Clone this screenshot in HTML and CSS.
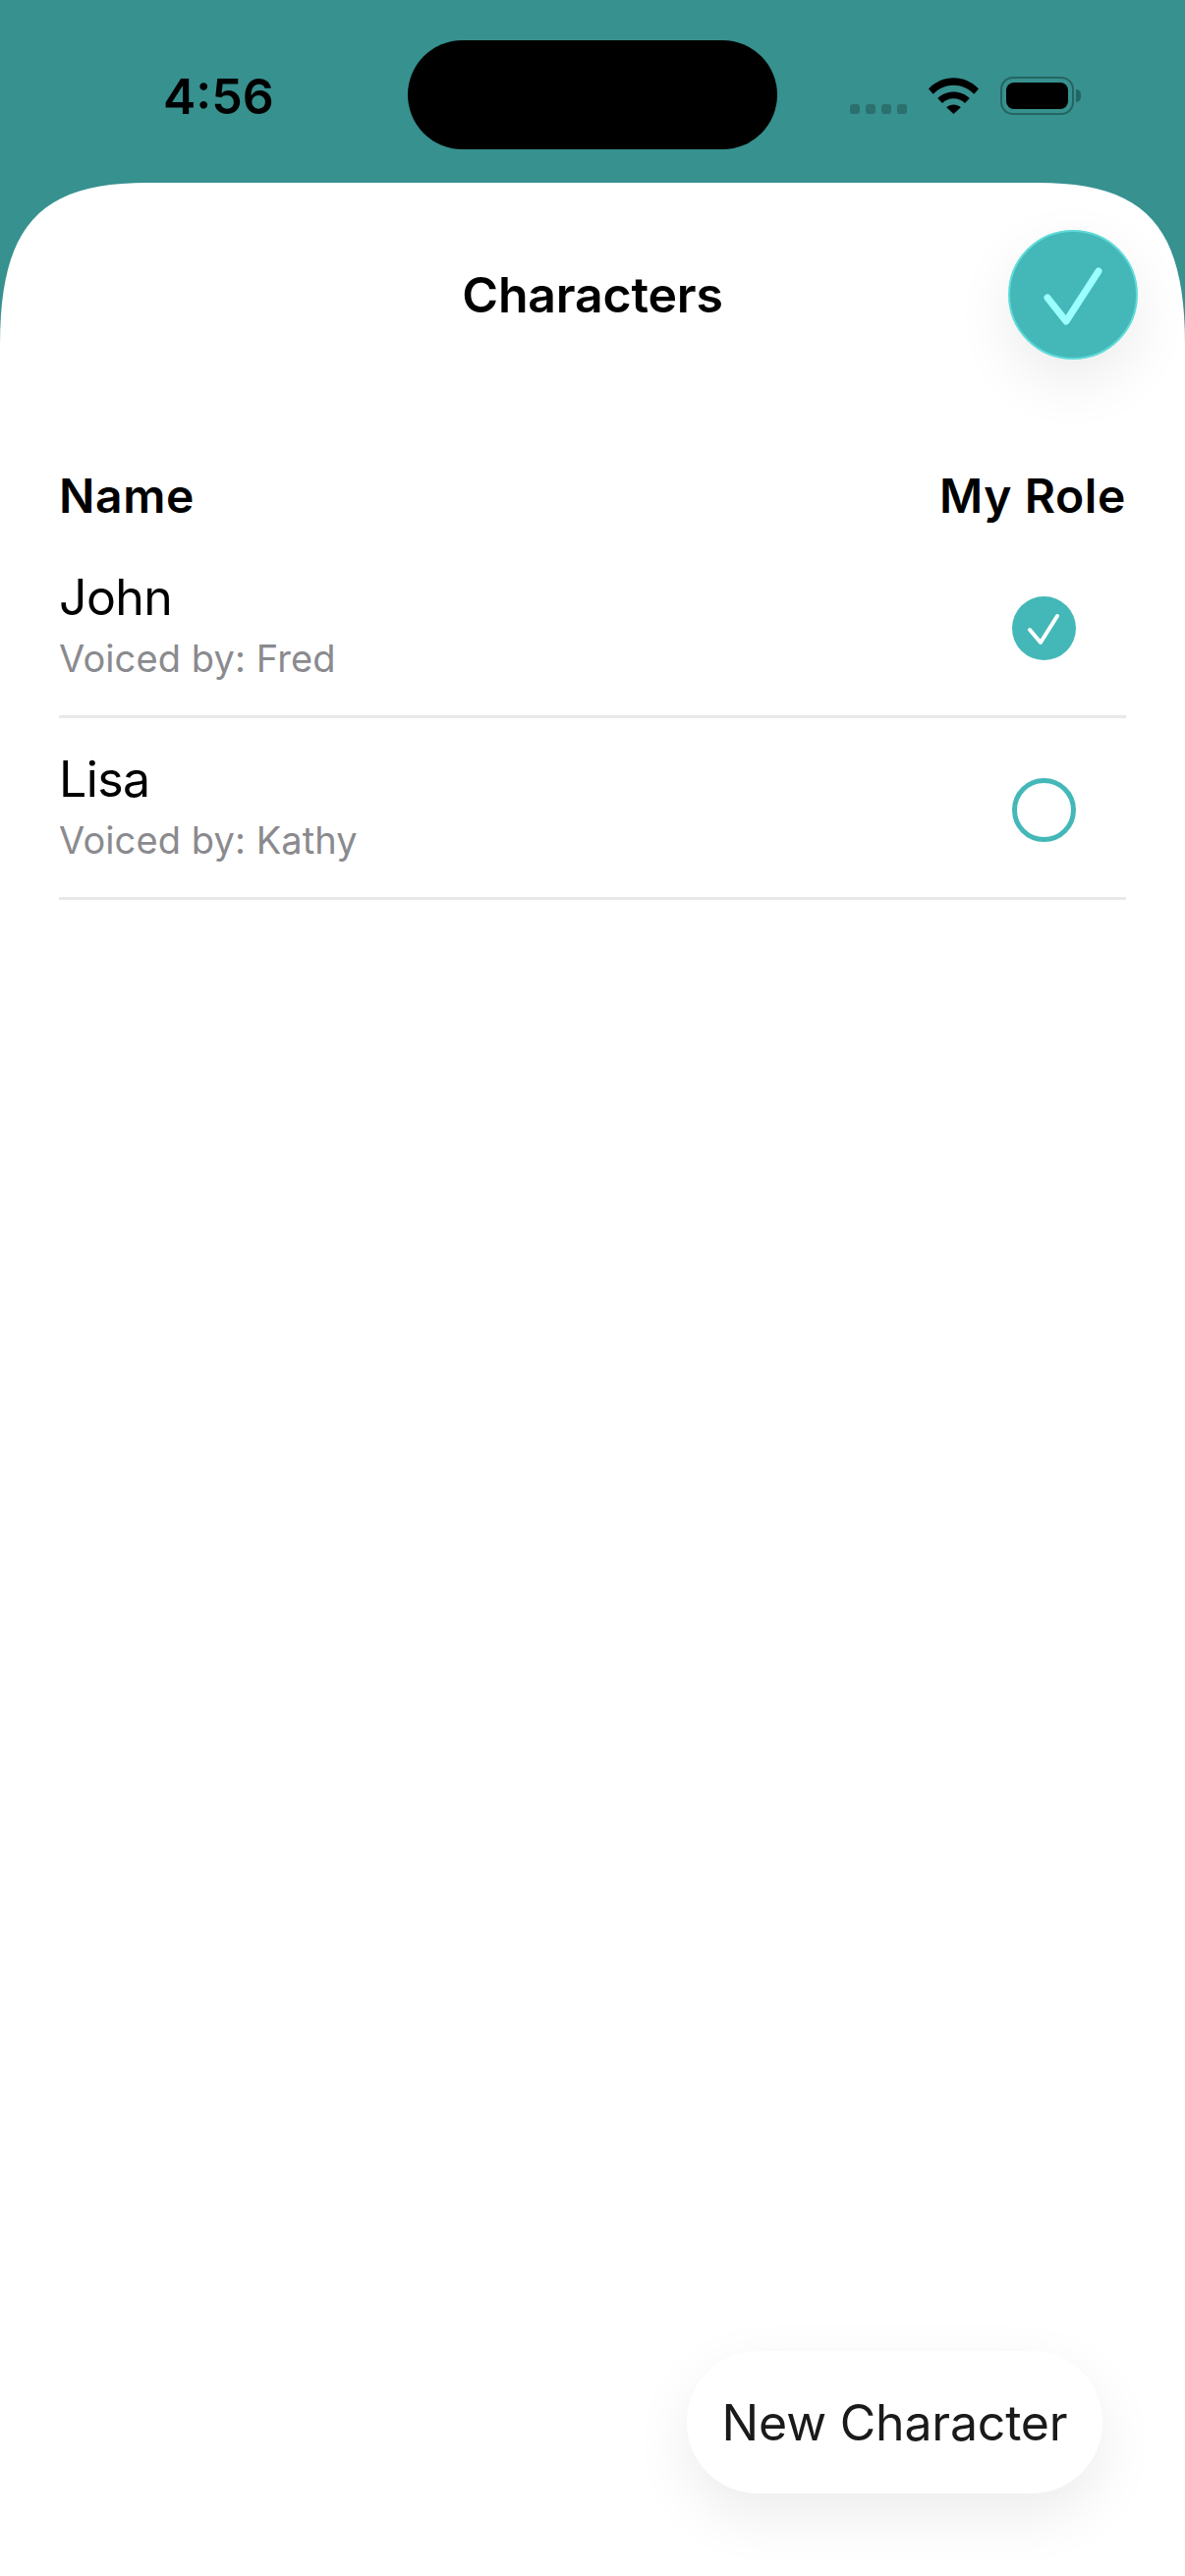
FILE: index.html
```html
<!DOCTYPE html>
<html lang="en">
<head>
<meta charset="utf-8">
<title>Characters</title>
<link rel="stylesheet" href="styles.css">
</head>
<body>
<div class="screen">
  <header class="status-bar">
    <span class="time">4:56</span>
    <div class="island"></div>
    <div class="status-icons">
      <div class="signal"><i></i><i></i><i></i><i></i></div>
      <svg class="wifi" width="51" height="37" viewBox="0 0 51 37">
        <path d="M0 11.5 C14 -3.5 37 -3.5 51 11.5 L46.3 16.7 C34.5 4.6 16.5 4.6 4.7 16.7 Z"/>
        <path d="M9.2 21 C18 12.3 33 12.3 41.8 21 L37 26 C30.5 19.8 20.5 19.8 14 26 Z"/>
        <path d="M18.2 30.2 C22.5 26.6 28.5 26.6 32.8 30.2 L25.5 37 Z"/>
      </svg>
      <div class="battery"><div class="battery-body"><div class="battery-fill"></div></div><div class="battery-tip"></div></div>
    </div>
  </header>
  <main class="sheet">
    <h1 class="title">Characters</h1>
    <button class="confirm" aria-label="Confirm">
      <svg width="132" height="132" viewBox="0 0 132 132"><path class="confirm-tick" d="M40 69 L59 93 L92 42"/></svg>
    </button>
    <div class="list-head"><span>Name</span><span>My Role</span></div>
    <div class="row">
      <div class="who"><div class="name">John</div><div class="voice">Voiced by: Fred</div></div>
      <div class="radio radio-on">
        <svg width="65" height="65" viewBox="0 0 65 65"><path class="radio-tick" d="M18 34 L29 47 L46 20"/></svg>
      </div>
    </div>
    <div class="row">
      <div class="who"><div class="name">Lisa</div><div class="voice">Voiced by: Kathy</div></div>
      <div class="radio"></div>
    </div>
    <button class="new-character">New Character</button>
  </main>
</div>
</body>
</html>
```
FILE: styles.css
```css
* { box-sizing: border-box; }
html, body { margin: 0; padding: 0; background: #fff; }
body { font-family: Inter, "Liberation Sans", sans-serif; color: #000; }

.screen {
  width: 1206px;
  height: 2622px;
  display: flex;
  flex-direction: column;
  background: #36918f;
  overflow: hidden;
  position: relative;
}

.status-bar {
  height: 186px;
  flex: none;
  position: relative;
  display: flex;
  align-items: flex-start;
  justify-content: space-between;
  padding: 70px 106px 0 166px;
}
.time { font-size: 50px; line-height: 56px; font-weight: 600; }
.island {
  position: absolute;
  left: 415px;
  top: 41px;
  width: 376px;
  height: 111px;
  border-radius: 56px;
  background: #000;
}
.status-icons { display: flex; align-items: flex-start; padding-top: 8px; }
.signal { display: flex; gap: 6px; margin-top: 28px; margin-right: 22px; }
.signal i { width: 10px; height: 10px; border-radius: 3px; background: #2b706e; }
.wifi { fill: #000; margin-right: 22px; margin-top: 1px; }
.battery { display: flex; align-items: center; }
.battery-body {
  width: 75px;
  height: 39px;
  padding: 4px;
  border: 2.5px solid #256461;
  border-radius: 13px;
}
.battery-fill { height: 100%; border-radius: 8px; background: #000; }
.battery-tip { width: 5px; height: 13px; margin-left: 2px; border-radius: 0 6px 6px 0; background: #256461; }

.sheet {
  flex: 1;
  position: relative;
  padding: 0 60px;
  background: #fff;
  clip-path: path("M0 165 C0 42 42 0 150 0 L1056 0 C1164 0 1206 42 1206 165 L1206 2436 L0 2436 Z");
}
.title {
  margin: 0;
  padding-top: 84px;
  font-size: 50px;
  line-height: 60px;
  font-weight: 600;
  letter-spacing: -0.2px;
  text-align: center;
}
.confirm {
  position: absolute;
  left: 1026px;
  top: 48px;
  width: 132px;
  height: 132px;
  padding: 0;
  border: 2px solid #5edbd8;
  border-radius: 50%;
  background: #44b8b8;
  box-shadow: 0 22px 60px rgba(0, 0, 0, 0.08);
  display: flex;
  align-items: center;
  justify-content: center;
}
.confirm svg { flex: none; }
.confirm-tick { fill: none; stroke: #9bffff; stroke-width: 7; stroke-linecap: round; stroke-linejoin: round; }

.list-head {
  display: flex;
  justify-content: space-between;
  margin-top: 146px;
  padding-bottom: 12px;
  font-size: 48px;
  line-height: 58px;
  font-weight: 600;
  letter-spacing: 0.6px;
}

.row {
  height: 185px;
  display: flex;
  align-items: flex-start;
  justify-content: space-between;
  border-bottom: 3px solid #e8e8e8;
  padding-right: 51px;
}
.who { padding-top: 32px; }
.name { font-size: 50px; line-height: 60px; font-weight: 400; letter-spacing: -0.6px; }
.voice { font-size: 38px; line-height: 46px; color: #8a8a8e; margin-top: 9px; letter-spacing: 0.1px; }

.radio {
  width: 65px;
  height: 65px;
  margin-top: 61px;
  border: 5px solid #44b8b8;
  border-radius: 50%;
  display: flex;
  align-items: center;
  justify-content: center;
}
.radio svg { flex: none; }
.radio-on { background: #44b8b8; border: 0; }
.radio-tick { fill: none; stroke: #fff; stroke-width: 4; stroke-linecap: round; stroke-linejoin: round; }

.new-character {
  position: absolute;
  left: 699px;
  top: 2207px;
  width: 423px;
  height: 145px;
  padding: 0;
  border: 0;
  border-radius: 72px;
  background: #fff;
  color: #1a1a1a;
  font: 400 50px/60px Inter, "Liberation Sans", sans-serif;
  letter-spacing: -0.2px;
  box-shadow: 0 22px 60px rgba(0, 0, 0, 0.08);
}
```
